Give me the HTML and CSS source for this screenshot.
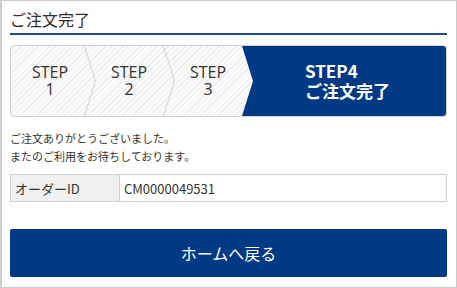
FILE: index.html
```html
<!DOCTYPE html>
<html lang="ja">
<head>
<meta charset="utf-8">
<link rel="stylesheet" href="styles.css">
</head>
<body>
<div class="page">
  <h1 class="title">ご注文完了</h1>
  <div class="steps">
    <div class="step step-first">
      <div class="step-label"><span class="ln">STEP</span><span class="ln">1</span></div>
      <svg class="chev" viewBox="0 0 12 70" preserveAspectRatio="none"><polyline points="0.5,0 11.5,35 0.5,70" fill="none" stroke="#d2d2d2" stroke-width="1"/></svg>
    </div>
    <div class="step">
      <div class="step-label"><span class="ln">STEP</span><span class="ln">2</span></div>
      <svg class="chev" viewBox="0 0 12 70" preserveAspectRatio="none"><polyline points="0.5,0 11.5,35 0.5,70" fill="none" stroke="#d2d2d2" stroke-width="1"/></svg>
    </div>
    <div class="step">
      <div class="step-label"><span class="ln">STEP</span><span class="ln">3</span></div>
    </div>
    <div class="step-current">
      <div class="step-label"><span class="ln">STEP4</span><span class="ln">ご注文完了</span></div>
    </div>
  </div>
  <p class="thanks">ご注文ありがとうございました。<br>またのご利用をお待ちしております。</p>
  <table class="order">
    <tr>
      <th>オーダーID</th>
      <td>CM0000049531</td>
    </tr>
  </table>
  <a class="home-btn" href="#">ホームへ戻る</a>
</div>
</body>
</html>
```

FILE: styles.css
```css
html, body {
  margin: 0;
  padding: 0;
  background: #fff;
}

body {
  font-family: "Noto Sans CJK JP", "Noto Sans", sans-serif;
  color: #333;
}

.page {
  box-sizing: border-box;
  width: 457px;
  height: 288px;
  border: 1px solid #cccccc;
  border-left-width: 2px;
  padding: 0 9px 0 8px;
}

.title {
  margin: 0;
  padding: 6px 0 2px;
  font-size: 16px;
  line-height: 24px;
  font-weight: normal;
  color: #352a30;
  border-bottom: 2px solid #1d4b8b;
}

.steps {
  margin-top: 10px;
  height: 70px;
  border: 1px solid #d0d0d0;
  border-radius: 4px;
  overflow: hidden;
  display: flex;
  background: repeating-linear-gradient(135deg, #fbfbfb 0 3px, #ebebeb 3px 4px);
}

.step {
  position: relative;
  box-sizing: border-box;
  width: 79px;
  padding-left: 11px;
  display: flex;
  align-items: center;
  justify-content: center;
  text-align: center;
  font-family: "Open Sans", "Noto Sans CJK JP", sans-serif;
  font-size: 16px;
  font-weight: 500;
  line-height: 17px;
  color: #333;
}

.step-first {
  width: 73px;
  padding-left: 5px;
}

.step-label {
  display: flex;
  flex-direction: column;
}

.ln {
  display: block;
}

.chev {
  position: absolute;
  top: 0;
  right: -12px;
  width: 12px;
  height: 100%;
  z-index: 1;
}

.step-current {
  flex: 1;
  display: flex;
  align-items: center;
  padding-left: 63px;
  background: #003a85;
  clip-path: polygon(0 0, 100% 0, 100% 100%, 0 100%, 11px 50%);
  color: #fff;
  font-weight: bold;
  font-size: 17px;
  line-height: 20px;
}

.thanks {
  margin: 12px 0 0;
  font-size: 11px;
  line-height: 18px;
  color: #333;
}

.order {
  margin-top: 9px;
  width: 100%;
  border-collapse: collapse;
  font-size: 13px;
  color: #333;
}

.order th,
.order td {
  height: 26px;
  padding: 0 4px;
  border: 1px solid #cfcfcf;
  text-align: left;
  font-weight: normal;
}

.order th {
  box-sizing: border-box;
  width: 109px;
  background: #f0f0f0;
}

.home-btn {
  display: flex;
  align-items: center;
  justify-content: center;
  margin-top: 27px;
  height: 48px;
  background: #003a85;
  border-radius: 2px;
  color: #fff;
  font-size: 16px;
  text-decoration: none;
}
```
